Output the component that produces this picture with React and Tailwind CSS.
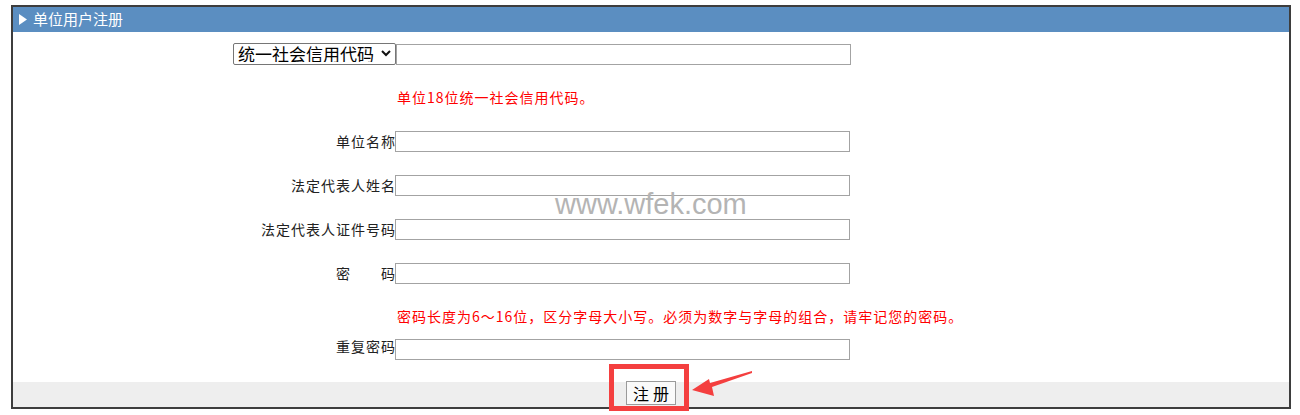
import React from 'react';

const cjk = { fontFamily: '"Noto Sans CJK SC", "Noto Sans", sans-serif' };

function Row({ label, children, className = 'h-[44px] items-center' }) {
  return (
    <div className={`flex ${className}`}>
      <div className="w-[383px] text-right text-[14px] tracking-[1px] text-[#222] leading-none shrink-0 -mr-[1px]">{label}</div>
      {children}
    </div>
  );
}

function Field() {
  return <input type="text" className="w-[455px] h-[21px] border border-[#a3a3a3] bg-white outline-none" />;
}

function Hint({ children }) {
  return (
    <div className="flex h-[43px] items-center">
      <div className="w-[384px] shrink-0" />
      <span className="text-[14px] tracking-[1px] text-[#ff0000] leading-none -mt-[2px]">{children}</span>
    </div>
  );
}

export default function App() {
  return (
    <div className="relative w-[1300px] h-[415px] bg-white overflow-hidden" style={cjk}>
      <div className="ml-[11px] mt-[5px] w-[1280px] border-2 border-[#3d3d3d] bg-white">
        {/* title bar */}
        <div className="h-[25px] bg-[#5b8ec1] flex items-center pl-[6px] gap-[6px] text-white text-[15px]">
          <svg width="8" height="11" viewBox="0 0 8 11"><path d="M0 0 L8 5.5 L0 11 Z" fill="#fff" /></svg>
          <span>单位用户注册</span>
        </div>

        <div className="h-[350px]">
          <div className="flex h-[44px] items-center">
            <div className="w-[220px] shrink-0" />
            <div className="relative">
              <select className="appearance-none w-[163px] h-[22px] border border-[#767676] rounded-[2px] bg-white pl-[4px] text-[17px] leading-none text-black outline-none">
                <option>统一社会信用代码</option>
              </select>
              <svg className="absolute right-[5px] top-[8px] pointer-events-none" width="10" height="7" viewBox="0 0 10 7">
                <path d="M1 1 L5 5 L9 1" stroke="#111" strokeWidth="2" fill="none" />
              </svg>
            </div>
            <Field />
          </div>

          <Hint>单位18位统一社会信用代码。</Hint>

          <Row label="单位名称"><Field /></Row>
          <Row label="法定代表人姓名"><Field /></Row>
          <Row label="法定代表人证件号码"><Field /></Row>
          <Row
            label={
              <span className="inline-flex w-[60px] justify-between">
                <span>密</span>
                <span>码</span>
              </span>
            }
          >
            <Field />
          </Row>

          <Hint>密码长度为6～16位，区分字母大小写。必须为数字与字母的组合，请牢记您的密码。</Hint>

          <Row label="重复密码" className="h-[44px] items-start pt-[1px]"><Field /></Row>
        </div>

        <div className="h-[25px] bg-[#eeeeee] flex justify-center items-start">
          <button className="w-[50px] h-[24px] border border-[#9a9a9a] bg-[#fafafa] text-[16px] leading-none text-black tracking-[4px] pl-[4px] -mt-[1px]">
            注册
          </button>
        </div>
      </div>

      {/* watermark */}
      <div
        className="absolute left-[555px] top-[190px] text-[29px] text-[#b4b4b4] leading-none"
        style={{ fontFamily: '"Liberation Sans", Arial, sans-serif' }}
      >
        www.wfek.com
      </div>

      {/* annotation box */}
      <div className="absolute left-[609px] top-[364px] w-[80px] h-[47px] border-[5px] border-[#f43f3f]" />

      {/* annotation arrow */}
      <svg className="absolute left-[688px] top-[366px]" width="70" height="34" viewBox="0 0 70 34">
        <path d="M4 24 L21 13 L22 17 L64 5 L64 7 L24 21 L26 30 Z" fill="#f43f3f" />
      </svg>
    </div>
  );
}
